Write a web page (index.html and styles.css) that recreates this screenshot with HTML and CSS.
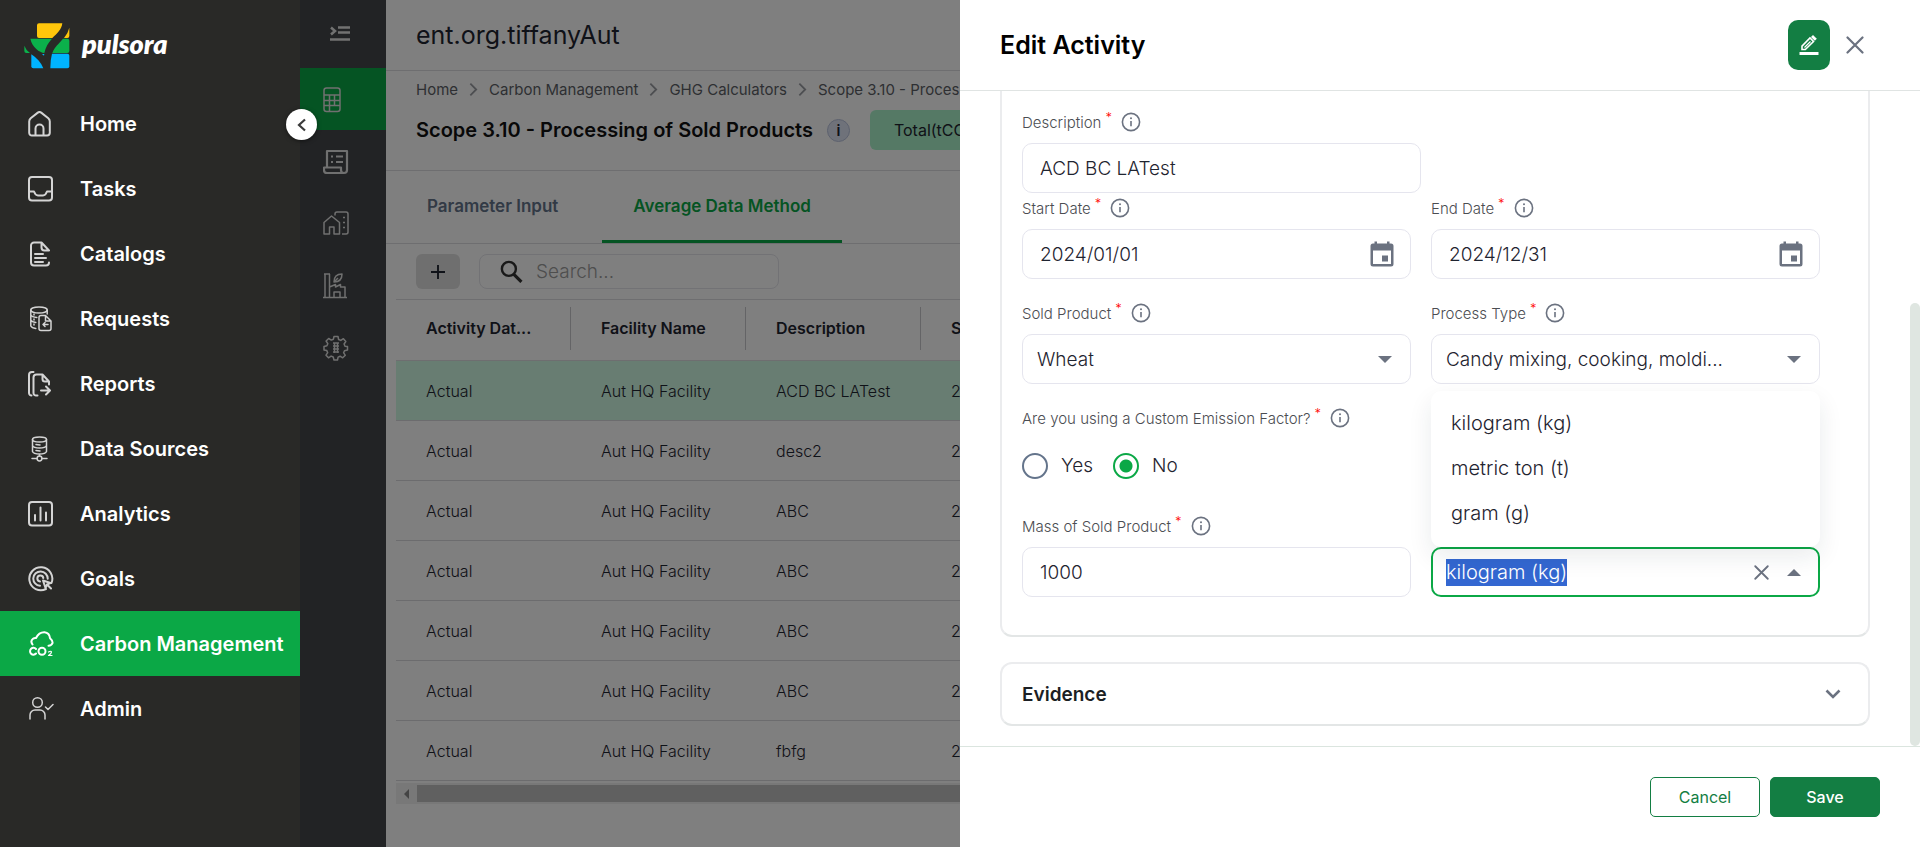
FILE: index.html
```html
<!DOCTYPE html>
<html lang="en">
<head>
<meta charset="utf-8">
<title>Edit Activity</title>
<link rel="stylesheet" href="styles.css">
</head>
<body>
<svg class="sprite" aria-hidden="true">
  <symbol id="info" viewBox="0 0 20 20"><circle cx="10" cy="10" r="8.6" fill="none" stroke="currentColor" stroke-width="1.6"/><path d="M10 9v5.2" stroke="currentColor" stroke-width="1.6"/><circle cx="10" cy="6.3" r="1" fill="currentColor"/></symbol>
  <symbol id="calendar" viewBox="0 0 24 26"><path fill="currentColor" fill-rule="evenodd" d="M4.500 0.500h2.500v2h10v-2h2.500v2h1.500a2.500 2.500 0 0 1 2.500 2.500v18a2.500 2.500 0 0 1-2.500 2.500h-18a2.500 2.500 0 0 1-2.500-2.500v-18a2.500 2.500 0 0 1 2.500-2.500h1.500zM3 9.500v13.500h18v-13.500zM12 14.500h6v6h-6z"/></symbol>
  <symbol id="crumb" viewBox="0 0 10 16"><path d="M1.500 1.500L8 8l-6.500 6.500" fill="none" stroke="currentColor" stroke-width="2"/></symbol>
  <symbol id="cross" viewBox="0 0 18 18"><path d="M1.500 1.500l15 15M16.500 1.500l-15 15" stroke="currentColor" stroke-width="2.200" stroke-linecap="round"/></symbol>
</svg>
<div class="app">
  <aside class="sidebar">
    <div class="brand">
      <svg class="brand-mark" viewBox="72 66 136 138" aria-hidden="true">
        <path d="M116 67H186C184 86 170 98 156 111H116q-6 0-6-6V73q0-6 6-6z" fill="#ffc60b"/>
        <path d="M207 80v25q0 6-6 6h-10q12-14 16-31z" fill="#ffc60b"/>
        <path d="M90 113H155C143 126 136 138 132 156C118 154 96 140 90 113z" fill="#0bb14b"/>
        <path d="M188 113H201q6 0 6 6v31q0 6-6 6H156C162 138 176 128 188 113z" fill="#0bb14b"/>
        <path d="M72 134q5 14 17 22H78q-6 0-6-6z" fill="#0bb14b"/>
        <path d="M93 160C108 170 122 184 129 202H99q-6 0-6-6z" fill="#00b4ff"/>
        <path d="M155 158H201q6 0 6 6v32q0 6-6 6H150Q150 176 155 158z" fill="#00b4ff"/>
        <path d="M125 159h7l-1 5z" fill="#00b4ff"/>
      </svg>
      <span class="brand-name">pulsora</span>
    </div>
    <nav class="nav">
      <a class="nav-link" href="#"><svg class="nav-icon" viewBox="0 0 26 26"><path d="M1.200 10.500q0-2 1.500-3.300L9.800 1.600q1.700-1.200 3.400 0l7.100 5.600q1.500 1.300 1.500 3.300v11.300a2.700 2.700 0 0 1-2.700 2.700H3.900a2.700 2.700 0 0 1-2.700-2.700zM7.500 24.500v-7a4 4 0 0 1 8 0v7"/></svg>Home</a>
      <a class="nav-link" href="#"><svg class="nav-icon" viewBox="0 0 26 26"><rect x="1" y="1" width="23" height="23.500" rx="3"/><path d="M1 15.500h5q1.500 4 4 4h5q2.500 0 4-4h5"/></svg>Tasks</a>
      <a class="nav-link" href="#"><svg class="nav-icon" viewBox="0 0 26 26"><path d="M21 9.500L13.500 1.500H6a3 3 0 0 0-3 3v17a3 3 0 0 0 3 3h12a3 3 0 0 0 3-3M13.500 1.500v5q0 3 3 3H21M7 13h8M7 17h11M7 21h8"/></svg>Catalogs</a>
      <a class="nav-link" href="#"><svg class="nav-icon thin" viewBox="0 0 26 26"><ellipse cx="11" cy="4" rx="8.200" ry="3"/><path d="M2.800 4v16q1 2 5 2.500M19.200 4v4M2.800 9q1 2 6 2.500M2.800 14q1 2 5 2.500M6 8v1M6 13v1M6 18v1M17.500 9.500H13a2 2 0 0 0-2 2v11a2 2 0 0 0 2 2h8a2 2 0 0 0 2-2V15zM17.500 9.500V15H23M20 18.500h-5M17 16.500l-2 2 2 2"/></svg>Requests</a>
      <a class="nav-link" href="#"><svg class="nav-icon" viewBox="0 0 26 26"><path d="M5.500 1H4a3 3 0 0 0-3 3v18a2.500 2.500 0 0 0 2.500 2.500M9.500 24.500h-1A2.500 2.500 0 0 1 5.500 22V6.500a3 3 0 0 1 3-3h6l6.500 7M14.500 3.500V8q0 2.500 2.500 2.500h4v3M13 19.500h8.500M18 15.500l4 4-4 4"/></svg>Reports</a>
      <a class="nav-link" href="#"><svg class="nav-icon thin" viewBox="0 0 26 26"><ellipse cx="11.500" cy="3.500" rx="7" ry="2.500"/><path d="M4.500 3.500v12q1 2.500 7 2.500t7-2.500v-12M4.500 9.500q1 2.500 7 2.500t7-2.500M8 8.500l4 .5M8 14.500l4 .5M11.500 18v2M4 22.500h5M14 22.500h5"/><circle cx="11.500" cy="22.500" r="2.400"/></svg>Data Sources</a>
      <a class="nav-link" href="#"><svg class="nav-icon" viewBox="0 0 26 26"><rect x="1" y="1" width="23" height="23.500" rx="3"/><path d="M7 14v5.500M12.500 6.500v13M18 11.500v8"/></svg>Analytics</a>
      <a class="nav-link" href="#"><svg class="nav-icon" viewBox="0 0 26 26"><path d="M18 23a11.500 11.500 0 1 1 5.500-6M12 19.800a7.200 7.200 0 1 1 7.700-7M12 15.500a3 3 0 1 1 3.300-3.500M15 14.500l2.500 7.500 1.500-3.500 3.500-1.500zM19 18.500l4 4"/></svg>Goals</a>
      <a class="nav-link active" href="#" aria-current="page"><svg class="nav-icon" viewBox="0 0 26 26"><path d="M4.500 13.500q-2.500-3.500 .5-5.800 1.200-.9 3-.7Q11 1 16.500 1.200q5 .5 5.500 6 3 2.500 2.500 5-1 2.500-4 2.500M8 18a3.400 3.400 0 1 0 0 4.500"/><circle cx="14" cy="20.300" r="3.500"/><path class="hair" d="M20.500 21q2.500-1.500 3 0 0 1.500-3 3.500h3.500"/></svg>Carbon Management</a>
      <a class="nav-link" href="#"><svg class="nav-icon thin" viewBox="0 0 26 26"><circle cx="9.500" cy="6.500" r="4.800"/><path d="M2 23v-4a5 5 0 0 1 5-5h5a5 5 0 0 1 5 5v4M17.500 11l2.500 2.500 5-5"/></svg>Admin</a>
    </nav>
    <button class="collapse" type="button" aria-label="Collapse menu"><svg width="10" height="14" viewBox="0 0 10 14"><path d="M8 1.500L2 7l6 5.500" fill="none" stroke="#3a3a3a" stroke-width="2.200"/></svg></button>
  </aside>

  <div class="workspace">
    <nav class="rail" aria-label="Carbon Management">
      <button class="rail-toggle" type="button" aria-label="Expand"><svg width="20" height="16" viewBox="0 0 20 16"><path d="M1 1.500l4 3.500-4 3.500M8 1.500h12M8 6.500h12M0 13.500h20" fill="none" stroke="currentColor" stroke-width="2.500"/></svg></button>
      <a class="rail-link current" href="#" aria-label="Calculators"><svg class="rail-icon" viewBox="0 0 26 26"><rect x="1" y="1" width="16" height="23.500" rx="2.500"/><path d="M1 8h16M1 13.500h16M1 18.500h16M6.500 8v16M11.500 8v10"/></svg></a>
      <a class="rail-link" href="#" aria-label="Inventory"><svg class="rail-icon bold" viewBox="0 0 26 26"><path d="M4 18V2h20v19q0 3-3 3H4q-3 0-3-3v-2.500h17V21q0 3 3 3M8 7.500h2M13 7.500h7M8 13h2M13 13h7"/></svg></a>
      <a class="rail-link" href="#" aria-label="Facilities"><svg class="rail-icon" viewBox="0 0 26 26"><path d="M1 23V11.500L8.500 5l8 6.500V23H11v-7H6.500v7zM12 4.500V3q0-2 2-2h9q2 0 2 2v18q0 2-2 2h-4M20 6.500h2M20 11.500h2M20 16.500h2"/></svg></a>
      <a class="rail-link" href="#" aria-label="Targets"><svg class="rail-icon" viewBox="0 0 26 26"><path d="M0 24.500h24M1 1h6M2 1v23M6.500 1v23M6.500 14l6-2.500v2.500l5-2.500v2.500h4.500v10M11 24v-5h6v5M11 9q0-8 8-8 0 8-8 8zM11 9l4-4"/></svg></a>
      <a class="rail-link" href="#" aria-label="Settings"><svg class="rail-icon" viewBox="0 0 26 26"><path d="M11 1.500h4l.6 3 2.200.9 2.600-1.700 2.400 2.800-1.700 2.500.9 2.200 2.500.3v3.500l-3 .7-.9 2 1.700 2.600-2.600 2.500-2.600-1.600-2 .9-.6 2.900h-3.500l-.8-3-2.100-.9-2.600 1.700-2.500-2.600 1.700-2.500-.9-2.100-2.800-.6v-3.600l2.900-.7.9-2-1.700-2.700 2.600-2.500 2.600 1.600 2.100-.9z"/><path d="M10 8h6M10 11h6M10 14h6M10 17h6M11.500 8v10M14.500 8v10"/></svg></a>
    </nav>
    <main class="main">
      <header class="org"><span>ent.org.tiffanyAut</span></header>
      <section class="page-head">
        <nav class="crumbs" aria-label="Breadcrumb">
          <a href="#">Home</a><svg class="crumb-sep"><use href="#crumb"/></svg>
          <a href="#">Carbon Management</a><svg class="crumb-sep"><use href="#crumb"/></svg>
          <a href="#">GHG Calculators</a><svg class="crumb-sep"><use href="#crumb"/></svg>
          <span>Scope 3.10 - Processing of Sold Products</span>
        </nav>
        <div class="title-row">
          <h1>Scope 3.10 - Processing of Sold Products</h1>
          <span class="badge-info">i</span>
          <span class="total">Total(tCO2e)</span>
        </div>
      </section>
      <div class="tabs" role="tablist">
        <button class="tab" type="button" role="tab">Parameter Input</button>
        <button class="tab selected" type="button" role="tab" aria-selected="true">Average Data Method</button>
      </div>
      <div class="toolbar">
        <button class="add" type="button" aria-label="Add"><svg width="14" height="14" viewBox="0 0 12 12"><path d="M6 0v12M0 6h12" stroke="currentColor" stroke-width="1.600"/></svg></button>
        <label class="search"><svg width="23" height="23" viewBox="0 0 22 22"><circle cx="8.500" cy="8.500" r="6.700" fill="none" stroke="currentColor" stroke-width="2.300"/><path d="M13 13.500l7.500 7.500" stroke="currentColor" stroke-width="3"/></svg><input type="text" placeholder="Search..." aria-label="Search"></label>
      </div>
      <div class="grid">
        <table>
          <thead><tr><th><span>Activity Dat...</span></th><th><span>Facility Name</span></th><th><span>Description</span></th><th><span>Start Date</span></th></tr></thead>
          <tbody>
            <tr class="picked"><td>Actual</td><td>Aut HQ Facility</td><td>ACD BC LATest</td><td>2024/01/01</td></tr>
            <tr><td>Actual</td><td>Aut HQ Facility</td><td>desc2</td><td>2024/01/01</td></tr>
            <tr><td>Actual</td><td>Aut HQ Facility</td><td>ABC</td><td>2024/01/01</td></tr>
            <tr><td>Actual</td><td>Aut HQ Facility</td><td>ABC</td><td>2024/01/01</td></tr>
            <tr><td>Actual</td><td>Aut HQ Facility</td><td>ABC</td><td>2024/01/01</td></tr>
            <tr><td>Actual</td><td>Aut HQ Facility</td><td>ABC</td><td>2024/01/01</td></tr>
            <tr><td>Actual</td><td>Aut HQ Facility</td><td>fbfg</td><td>2024/01/01</td></tr>
          </tbody>
        </table>
        <div class="hscroll"><svg width="5" height="10" viewBox="0 0 5 10"><path d="M5 0v10L0 5z" fill="currentColor"/></svg><div class="hthumb"></div></div>
      </div>
    </main>
    <div class="scrim"></div>
  </div>

  <section class="drawer" role="dialog" aria-labelledby="drawer-title">
    <header class="drawer-head">
      <h2 id="drawer-title">Edit Activity</h2>
      <button class="edit" type="button" aria-label="Edit"><svg width="20" height="20" viewBox="0 0 20 20"><path d="M.5 17h19v3H.5z" fill="#fff"/><path d="M3 14.500v-3.300L11 3l3.500 3.500-8.200 8z" fill="none" stroke="#fff" stroke-width="1.600"/><path d="M5.500 12.500L11.500 6.500" stroke="#fff" stroke-width="1.300"/><path d="M12 2l2-2 3.800 3.800-2 2z" fill="#fff"/></svg></button>
      <button class="close" type="button" aria-label="Close"><svg width="18" height="18"><use href="#cross"/></svg></button>
    </header>
    <div class="drawer-body">
      <form class="card form">
        <div class="row">
          <div class="field half">
            <div class="label"><label for="desc">Description</label><sup>*</sup><svg class="info"><use href="#info"/></svg></div>
            <div class="box"><input id="desc" type="text" value="ACD BC LATest"></div>
          </div>
        </div>
        <div class="row tight">
          <div class="field">
            <div class="label"><label for="start">Start Date</label><sup>*</sup><svg class="info"><use href="#info"/></svg></div>
            <div class="box"><input id="start" type="text" value="2024/01/01"><svg class="cal"><use href="#calendar"/></svg></div>
          </div>
          <div class="field">
            <div class="label"><label for="end">End Date</label><sup>*</sup><svg class="info"><use href="#info"/></svg></div>
            <div class="box"><input id="end" type="text" value="2024/12/31"><svg class="cal"><use href="#calendar"/></svg></div>
          </div>
        </div>
        <div class="row">
          <div class="field">
            <div class="label"><label for="product">Sold Product</label><sup>*</sup><svg class="info"><use href="#info"/></svg></div>
            <div class="box pick"><select id="product"><option>Wheat</option></select><span class="caret"></span></div>
          </div>
          <div class="field">
            <div class="label"><label for="process">Process Type</label><sup>*</sup><svg class="info"><use href="#info"/></svg></div>
            <div class="box pick"><select id="process"><option>Candy mixing, cooking, moldi...</option></select><span class="caret"></span></div>
          </div>
        </div>
        <div class="row">
          <div class="field" role="radiogroup" aria-labelledby="factor">
            <div class="label"><span id="factor">Are you using a Custom Emission Factor?</span><sup>*</sup><svg class="info"><use href="#info"/></svg></div>
            <div class="radios">
              <label><input type="radio" name="factor" value="yes">Yes</label>
              <label><input type="radio" name="factor" value="no" checked>No</label>
            </div>
          </div>
        </div>
        <div class="row bottom">
          <div class="field">
            <div class="label"><label for="mass">Mass of Sold Product</label><sup>*</sup><svg class="info"><use href="#info"/></svg></div>
            <div class="box"><input id="mass" type="text" value="1000"></div>
          </div>
          <div class="field">
            <div class="box pick focused">
              <input id="unit" type="text" role="combobox" aria-label="Unit" aria-expanded="true" aria-controls="units" value="kilogram (kg)">
              <button class="clear" type="button" aria-label="Clear"><svg width="15" height="15"><use href="#cross"/></svg></button>
              <span class="caret up"></span>
              <ul class="menu" id="units" role="listbox">
                <li role="option" aria-selected="true">kilogram (kg)</li>
                <li role="option">metric ton (t)</li>
                <li role="option">gram (g)</li>
              </ul>
            </div>
          </div>
        </div>
      </form>
      <button class="card evidence" type="button">Evidence<svg width="16" height="11" viewBox="0 0 16 11"><path d="M1.500 1.500L8 8l6.500-6.500" fill="none" stroke="#6b7280" stroke-width="2.600"/></svg></button>
      <div class="vthumb"></div>
    </div>
    <footer class="drawer-foot">
      <button class="btn" type="button">Cancel</button>
      <button class="btn primary" type="button">Save</button>
    </footer>
  </section>
</div>
<script src="app.js"></script>
</body>
</html>
```
FILE: app.js
```js
const unit = document.getElementById("unit");
unit.focus({ preventScroll: true });
unit.select();
```
FILE: styles.css
```css
* { box-sizing: border-box; }
body { margin: 0; font-family: Inter, "Liberation Sans", sans-serif; font-size: 15px; color: #1f2430; }
button, input, select { font: inherit; color: inherit; }
button { cursor: pointer; border: 0; background: none; padding: 0; }
a { color: inherit; text-decoration: none; }
h1, h2, ul { margin: 0; padding: 0; }
.sprite { position: absolute; width: 0; height: 0; }

.app { position: relative; display: flex; height: 100vh; overflow: hidden; background: #fff; }

/* primary navigation */
.sidebar { position: relative; z-index: 2; flex: 0 0 300px; background: #292927; color: #fff; }
.brand { display: flex; align-items: center; gap: 12px; height: 91px; padding-left: 24px; }
.brand-mark { width: 46px; height: 46px; }
.brand-name { padding-bottom: 4px; font: italic 800 27px/32px Lato, sans-serif; }
.nav-link { display: flex; align-items: center; gap: 26px; height: 65px; padding: 1px 0 0 28px; font-size: 20px; font-weight: 600; white-space: nowrap; }
.nav-link.active { background: #0ba846; }
.nav-icon { flex: none; width: 26px; height: 26px; fill: none; stroke: #d4d4d4; stroke-width: 2; stroke-linecap: round; stroke-linejoin: round; }
.nav-icon.thin { stroke-width: 1.5; }
.nav-icon .hair { stroke-width: 1.2; }
.active .nav-icon { stroke: #fff; }
.collapse { position: absolute; right: -17px; top: 109px; display: grid; place-items: center; width: 31px; height: 31px; border-radius: 50%; background: #fff; box-shadow: 0 1px 4px rgba(0, 0, 0, .5); }

/* secondary rail and page */
.workspace { position: relative; display: flex; flex: 1; min-width: 0; }
.scrim { position: absolute; inset: 0; background: rgba(0, 0, 0, .5); }
.rail { flex: 0 0 86px; background: #45474a; color: #e4e4e4; }
.rail-toggle { display: block; height: 68px; padding: 4px 0 0 30px; }
.rail-link { display: flex; align-items: center; height: 62px; padding: 1px 0 0 23px; }
.rail-link.current { background: #0ba846; }
.rail-icon { width: 26px; height: 26px; fill: none; stroke: #e0e0e0; stroke-width: 1.5; stroke-linejoin: round; }
.rail-icon.bold { stroke-width: 2.2; }

.main { flex: 1; min-width: 0; overflow: hidden; }
.org { display: flex; align-items: center; height: 71px; padding-left: 30px; border-bottom: 1px solid #dcdce0; font-size: 25px; }
.org, .crumbs, .total { white-space: nowrap; }
.page-head { height: 100px; padding: 7px 0 0 30px; border-bottom: 1px solid #dcdce0; }
.crumbs { display: flex; align-items: center; gap: 11px; height: 22px; color: #5c5f66; }
.crumb-sep { flex: none; width: 9px; height: 15px; color: #9a9da3; }
.title-row { display: flex; align-items: center; height: 40px; margin-top: 10px; }
h1 { font-size: 20px; font-weight: 600; color: #111; white-space: nowrap; }
.badge-info { display: grid; place-items: center; width: 23px; height: 23px; margin: 0 20px 0 14px; border: 1px solid #b9c2dc; border-radius: 50%; background: #dfe5f5; font-size: 15px; font-weight: 600; }
.total { padding: 0 24px; border-radius: 6px; background: #aaf2cb; font-size: 16px; line-height: 40px; }
.tabs { display: flex; height: 73px; border-bottom: 1px solid #dcdce0; }
.tab { padding: 0 44px 0 41px; font-size: 17px; font-weight: 600; color: #64748b; border-bottom: 3px solid transparent; white-space: nowrap; }
.tab.selected { padding: 0 31px; color: #0ba846; border-color: #0ba846; }
.toolbar { display: flex; gap: 19px; padding: 10px 0 10px 30px; }
.add { display: grid; place-items: center; width: 44px; height: 35px; border-radius: 6px; background: #dfdfdf; }
.search { display: flex; align-items: center; gap: 13px; width: 300px; height: 35px; padding-left: 20px; border: 1px solid #e4e4ea; border-radius: 8px; color: #333; }
.search input { flex: 1; min-width: 0; padding: 0; border: 0; background: none; font-size: 19px; font-weight: 300; }
.search input::placeholder { color: #9c9c9c; }
.grid { margin-left: 10px; border-top: 1px solid #dcdce0; }
table { width: 1040px; border-collapse: separate; border-spacing: 0; table-layout: fixed; }
th, td { width: 175px; padding: 0; text-align: left; white-space: nowrap; font-size: 16px; }
th:last-child, td:last-child { width: auto; }
th { height: 61px; padding-bottom: 3px; border-bottom: 1px solid #dcdce0; font-weight: 600; }
th span { display: block; height: 43px; padding-left: 30px; border-right: 1px solid #c8c8cc; line-height: 43px; }
td { height: 60px; padding-left: 30px; border-bottom: 1px solid #d8d8dc; font-weight: 300; }
.picked td { background: #d0fae4; }
.hscroll { display: flex; align-items: center; height: 21px; margin-top: 2px; padding-left: 8px; background: #f1f1f1; color: #888; }
.hthumb { flex: 1; height: 17px; margin-left: 8px; background: #c1c1c1; }

/* edit panel */
.drawer { position: absolute; z-index: 3; inset: 0 0 0 50%; display: flex; flex-direction: column; background: #fff; }
.drawer-head { display: flex; align-items: center; height: 91px; padding: 0 56px 0 40px; border-bottom: 1px solid #e0e4e3; color: #6b7280; }
h2 { flex: 1; font-size: 25px; font-weight: 600; color: #000; }
.edit { display: grid; place-items: center; width: 42px; height: 50px; border-radius: 10px; background: #137e43; }
.close { display: grid; place-items: center; width: 18px; height: 18px; margin-left: 16px; }
.drawer-body { position: relative; flex: 1; min-height: 0; padding: 0 50px 20px 40px; overflow: hidden; }
.card { width: 100%; border: 2px solid #ebecee; border-bottom-color: #e3e6e6; border-radius: 12px; background: #fff; }
.form { padding: 16px 48px 38px 20px; border-top: 0; border-radius: 0 0 12px 12px; }
.row { display: grid; grid-template-columns: 1fr 1fr; column-gap: 20px; margin-top: 19px; }
.row:first-child { display: block; margin-top: 0; }
.row.tight { margin-top: 0; }
.row.bottom { align-items: end; }
.half { width: 50%; }
.field { min-width: 0; }
.label { display: flex; align-items: center; height: 30px; margin-bottom: 6px; color: #4b4d52; font-weight: 300; white-space: nowrap; }
.label sup { align-self: flex-start; margin: 0 9px 0 4px; color: #f00; font-size: 13px; line-height: 20px; }
.info { width: 20px; height: 20px; color: #6b7280; }
.box { position: relative; display: flex; align-items: center; height: 50px; padding: 0 16px; border: 1px solid #e5e5ee; border-radius: 10px; font-size: 19px; font-weight: 300; }
.box input, .box select { flex: 1; min-width: 0; height: 27px; padding: 0 1px; border: 0; outline: 0; background: none; line-height: 27px; }
.box select { appearance: none; padding: 0; }
.box.pick { padding: 0 18px 0 14px; }
.cal { width: 24px; height: 26px; color: #6b7280; }
.caret { border: 7px solid transparent; border-top-color: #6b7280; border-bottom-width: 0; }
.caret.up { border-width: 0 7px 7px; border-color: transparent transparent #6b7280; }
.box.focused { padding: 0 17px 0 13px; border: 2px solid #0ba846; font-size: 20px; }
.box.focused input { padding: 0; }
.box.focused input::selection { background: #3367d1; color: #fff; }
.clear { display: grid; place-items: center; width: 15px; height: 15px; margin-right: 18px; color: #6b7280; }
.menu { position: absolute; left: -2px; right: -2px; bottom: 48px; padding: 10px 0 11px; border-radius: 10px; background: #fff; box-shadow: 0 10px 24px rgba(20, 40, 60, .09); list-style: none; }
.menu li { padding-left: 20px; line-height: 45px; }
.radios { display: flex; align-items: center; gap: 20px; height: 53px; font-size: 19px; font-weight: 300; }
.radios label { display: flex; align-items: center; gap: 13px; }
.radios input { appearance: none; width: 26px; height: 26px; margin: 0; border: 2px solid #64748b; border-radius: 50%; }
.radios input:checked { border-color: #0ba846; background: radial-gradient(circle, #0ba846 6px, #fff 7px); }
.evidence { display: flex; align-items: center; justify-content: space-between; height: 64px; margin-top: 25px; padding: 0 27px 0 20px; font-size: 19px; font-weight: 600; color: #1c1f24; }
.vthumb { position: absolute; right: 0; top: 212px; bottom: 0; width: 10px; border-radius: 5px; background: #dfe6e1; }
.drawer-foot { display: flex; justify-content: flex-end; gap: 10px; padding: 30px 40px; border-top: 1px solid #dbe5df; }
.btn { width: 110px; height: 40px; border: 1px solid #137e43; border-radius: 5px; color: #137e43; font-size: 16px; }
.btn.primary { background: #137e43; color: #fff; font-weight: 500; }
```
